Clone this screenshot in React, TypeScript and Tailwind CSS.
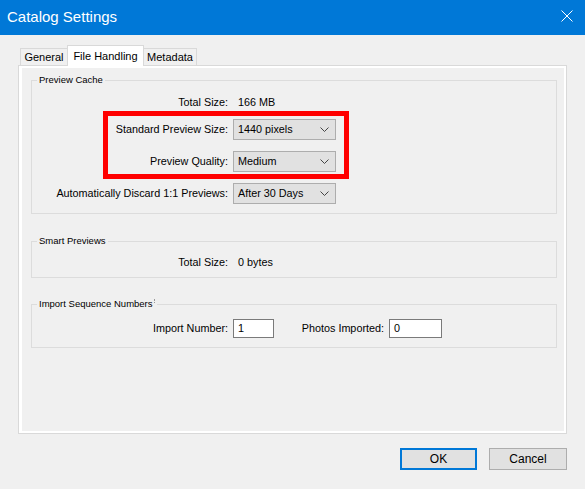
import React from 'react';

function Chevron() {
  return (
    <svg width="9" height="5" viewBox="0 0 9 5" className="shrink-0">
      <path d="M0.5 0.5 L4.5 4.5 L8.5 0.5" fill="none" stroke="#444" strokeWidth="1" />
    </svg>
  );
}

function Select({ value }: { value: string }) {
  return (
    <div className="flex h-[21px] w-[103px] items-center justify-between border border-[#adadad] bg-[#e1e1e1] pl-[4px] pr-[6px] text-[10.8px] text-black">
      <span>{value}</span>
      <Chevron />
    </div>
  );
}

function Group({
  title,
  children,
  className = '',
  mark = false,
}: {
  title: string;
  children: React.ReactNode;
  className?: string;
  mark?: boolean;
}) {
  return (
    <fieldset className={`border border-[#dcdcdc] ${className}`}>
      <legend className="ml-[5px] flex items-start px-[2px] text-[9.5px] leading-[12px] text-black">
        {title}
        {mark && <span className="ml-[1px] mt-[1px] h-[4px] w-px border-l border-dotted border-[#9a9a9a]" />}
      </legend>
      {children}
    </fieldset>
  );
}

function Row({
  label,
  children,
  className = '',
}: {
  label: string;
  children: React.ReactNode;
  className?: string;
}) {
  return (
    <div className={`flex h-[21px] items-center ${className}`}>
      <span className="w-[196px] shrink-0 text-right text-[10.8px] text-black">{label}</span>
      <div className="ml-[5px] flex items-center">{children}</div>
    </div>
  );
}

function Field({ value, width }: { value: string; width: string }) {
  return (
    <div className={`flex h-[19px] ${width} items-center border border-[#7a7a7a] bg-white pl-[4px] text-[10.8px] text-black`}>
      {value}
    </div>
  );
}

export default function App() {
  return (
    <div className="flex h-[489px] w-[585px] flex-col overflow-hidden bg-[#f0f0f0] font-['Liberation_Sans',Arial,sans-serif]">
      {/* title bar */}
      <div className="flex h-[35px] shrink-0 items-start justify-between bg-[#0078d7] pl-[7px] pr-[12px]">
        <span className="mt-[8px] text-[15px] leading-[18px] text-white">Catalog Settings</span>
        <svg width="12" height="12" viewBox="0 0 12 12" className="mt-[10px]">
          <path d="M0.5 0.5 L11.5 11.5 M11.5 0.5 L0.5 11.5" stroke="#fff" strokeWidth="1" />
        </svg>
      </div>

      <div className="flex flex-col px-[18px]">
        {/* tabs */}
        <div className="mt-[10px] flex h-[20px] items-end pl-[2px] text-[11px] text-black">
          <div className="flex h-[17px] w-[47px] items-center justify-center border border-b-0 border-r-0 border-[#d9d9d9] bg-[#f0f0f0]">
            General
          </div>
          <div className="relative z-10 -mb-px flex h-[21px] w-[77px] items-center justify-center border border-b-0 border-[#d9d9d9] bg-white">
            File Handling
          </div>
          <div className="flex h-[17px] w-[53px] items-center justify-center border border-b-0 border-l-0 border-[#d9d9d9] bg-[#f0f0f0]">
            Metadata
          </div>
        </div>

        {/* tab page */}
        <div className="h-[369px] border border-[#d9d9d9]">
          <div className="h-full border-b-2 border-l-[3px] border-r-2 border-t-2 border-white bg-[#f0f0f0] pl-[9px] pr-[7px] pt-[6px]">
            <Group title="Preview Cache" className="pb-[9px]">
              <Row label="Total Size:" className="mt-[6px]">
                <span className="ml-[5px] text-[10.8px] text-black">166 MB</span>
              </Row>
              <div className="relative">
                <Row label="Standard Preview Size:" className="mt-[6px]">
                  <Select value="1440 pixels" />
                </Row>
                <Row label="Preview Quality:" className="mt-[11px]">
                  <Select value="Medium" />
                </Row>
                <div className="pointer-events-none absolute bottom-[-7px] left-[71px] top-[-8px] w-[246px] border-[5px] border-[#ff0000]" />
              </div>
              <Row label="Automatically Discard 1:1 Previews:" className="mt-[11px]">
                <Select value="After 30 Days" />
              </Row>
            </Group>

            <Group title="Smart Previews" className="mt-[21px] pb-[4px]">
              <Row label="Total Size:" className="mt-[5px]">
                <span className="ml-[5px] text-[10.8px] text-black">0 bytes</span>
              </Row>
            </Group>

            <Group title="Import Sequence Numbers" className="mt-[20px] pb-[9px]" mark>
              <div className="mt-[9px] flex h-[19px] items-center text-[10.8px] text-black">
                <span className="w-[196px] shrink-0 text-right">Import Number:</span>
                <div className="ml-[5px]">
                  <Field value="1" width="w-[41px]" />
                </div>
                <span className="w-[110px] shrink-0 text-right">Photos Imported:</span>
                <div className="ml-[5px]">
                  <Field value="0" width="w-[53px]" />
                </div>
              </div>
            </Group>
          </div>
        </div>

        {/* buttons */}
        <div className="mt-[14px] flex justify-end gap-[12px] text-[12px] text-black">
          <button className="flex h-[22px] w-[77px] items-center justify-center border-2 border-[#0078d7] bg-[#e1e1e1]">
            OK
          </button>
          <button className="flex h-[22px] w-[78px] items-center justify-center border border-[#adadad] bg-[#e1e1e1]">
            Cancel
          </button>
        </div>
      </div>
    </div>
  );
}
